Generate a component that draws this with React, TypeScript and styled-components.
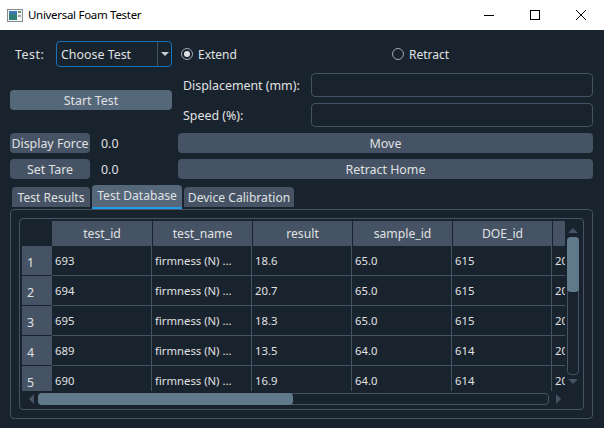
import React from 'react'
import styled, { createGlobalStyle } from 'styled-components'

const GlobalStyle = createGlobalStyle`
  html, body {
    margin: 0;
    padding: 0;
    background: #19232d;
  }
  * {
    box-sizing: border-box;
  }
`

const Window = styled.div`
  width: 604px;
  height: 428px;
  display: flex;
  flex-direction: column;
  overflow: hidden;
  background: #19232d;
  color: #e0e1e3;
  font-family: "Noto Sans", "Open Sans", sans-serif;
  font-size: 12.4px;
  line-height: 16px;
`

const TitleBar = styled.div`
  height: 30px;
  flex: none;
  display: flex;
  align-items: center;
  background: #fff;
  color: #000;
  padding-left: 7px;
`

const TitleText = styled.span`
  margin-left: 5px;
  flex: 1;
  font-size: 11.5px;
  letter-spacing: -0.3px;
`

const WindowButton = styled.div`
  width: 46px;
  height: 30px;
  display: flex;
  align-items: center;
  justify-content: center;
`

const Content = styled.div`
  flex: 1;
  padding: 11px 11px 9px 10px;
  display: flex;
  flex-direction: column;
`

const TopGrid = styled.div`
  display: grid;
  grid-template-columns: 162px 415px;
  column-gap: 6px;
`

const LeftColumn = styled.div`
  display: flex;
  flex-direction: column;
`

const TestRow = styled.div`
  height: 26px;
  display: flex;
  align-items: center;
  padding-left: 5px;
`

const TestLabel = styled.span`
  width: 41px;
  padding-top: 1px;
  letter-spacing: 0.5px;
`

const Combo = styled.div`
  width: 116px;
  height: 26px;
  display: flex;
  align-items: center;
  border: 1px solid #1a72bb;
  border-radius: 4px;
  padding-left: 4px;
`

const ComboText = styled.span`
  flex: 1;
  padding-top: 1px;
`

const ComboArrow = styled.div`
  width: 14px;
  height: 24px;
  border-left: 1px solid #455364;
  display: flex;
  align-items: center;
  justify-content: center;

  &::after {
    content: "";
    border-left: 4px solid transparent;
    border-right: 4px solid transparent;
    border-top: 4px solid #c9cdd0;
  }
`

const Button = styled.div<{ $accent?: boolean; $width?: number }>`
  height: 20px;
  width: ${(p) => (p.$width ? `${p.$width}px` : '100%')};
  flex: none;
  display: flex;
  align-items: center;
  justify-content: center;
  padding-top: 1px;
  border-radius: 4px;
  background: ${(p) => (p.$accent ? '#54687a' : '#455364')};
  white-space: nowrap;
`

const StartButton = styled(Button)`
  margin-top: 23px;
`

const RightColumn = styled.div`
  display: flex;
  flex-direction: column;
  gap: 6px;
`

const RadioRow = styled.div`
  height: 26px;
  display: grid;
  grid-template-columns: 211px 1fr;
  padding-left: 3px;
`

const RadioItem = styled.div`
  display: flex;
  align-items: center;
  gap: 5px;
`

const RadioLabel = styled.span`
  padding-top: 1px;
  font-size: 12px;
`

const RadioMark = styled.span<{ $checked?: boolean }>`
  width: 12px;
  height: 12px;
  border-radius: 50%;
  border: 1px solid #9da9b5;
  display: flex;
  align-items: center;
  justify-content: center;

  &::after {
    content: "";
    width: 6px;
    height: 6px;
    border-radius: 50%;
    background: ${(p) => (p.$checked ? '#e0e1e3' : 'transparent')};
  }
`

const FormGrid = styled.div`
  display: grid;
  grid-template-columns: 128px 282px;
  grid-auto-rows: 24px;
  row-gap: 6px;
  padding-left: 5px;
  align-items: center;
`

const FieldLabel = styled.span`
  white-space: nowrap;
  padding-top: 1px;
`

const Field = styled.div`
  height: 24px;
  border: 1px solid #455364;
  border-radius: 4px;
`

const ActionRow = styled.div`
  display: grid;
  grid-template-columns: 162px 415px;
  column-gap: 6px;
  margin-top: 6px;
`

const ReadoutGroup = styled.div`
  display: flex;
  align-items: center;
`

const Readout = styled.span`
  margin-left: 11px;
  padding-top: 1px;
`

const TabBar = styled.div`
  display: flex;
  align-items: flex-start;
  gap: 2px;
  height: 24px;
  margin-top: 6px;
  padding-left: 2px;
`

const Tab = styled.div<{ $selected?: boolean; $width: number }>`
  width: ${(p) => p.$width}px;
  height: ${(p) => (p.$selected ? 24 : 20)}px;
  margin-top: ${(p) => (p.$selected ? 0 : 2)}px;
  padding-top: ${(p) => (p.$selected ? 0 : 1)}px;
  display: flex;
  align-items: center;
  justify-content: center;
  border-radius: 4px 4px 0 0;
  background: ${(p) => (p.$selected ? '#54687a' : '#455364')};
  border-bottom: ${(p) => (p.$selected ? '2px solid #259ae9' : 'none')};
  font-size: 12.1px;
  white-space: nowrap;
`

const TabPane = styled.div`
  width: 583px;
  height: 210px;
  border: 1px solid #455364;
  border-radius: 4px;
  padding: 8px;
`

const TableFrame = styled.div`
  height: 192px;
  border: 1px solid #455364;
  border-radius: 4px;
  padding: 2px;
  display: grid;
  grid-template-columns: 543px 16px;
  grid-template-rows: 170px 14px;
`

const Viewport = styled.div`
  overflow: hidden;
`

const Corner = styled.div`
  width: 30px;
`

const HeaderRow = styled.div`
  display: grid;
  grid-template-columns: 30px 101px repeat(5, 100px);
  width: 631px;
  height: 25px;
`

const HeaderCell = styled.div`
  background: #455364;
  border-right: 1px solid #19232d;
  padding-top: 1px;
  font-size: 12.2px;
  display: flex;
  align-items: center;
  justify-content: center;
`

const DataRow = styled.div`
  display: grid;
  grid-template-columns: 30px repeat(6, 100px);
  width: 630px;
  height: 30px;
`

const RowHeader = styled.div`
  background: #455364;
  border-bottom: 1px solid #19232d;
  padding: 9px 0 0 5px;
`

const Cell = styled.div`
  border-right: 1px solid #455364;
  border-bottom: 1px solid #455364;
  padding: 1px 0 0 3px;
  font-size: 11.3px;
  display: flex;
  align-items: center;
  white-space: nowrap;
  overflow: hidden;
`

const VScroll = styled.div`
  grid-column: 2;
  grid-row: 1 / 3;
  display: flex;
  flex-direction: column;
  align-items: center;
  padding-top: 7px;
  gap: 4px;
`

const ArrowUp = styled.span`
  border-left: 5px solid transparent;
  border-right: 5px solid transparent;
  border-bottom: 5px solid #455364;
`

const ArrowDown = styled.span`
  border-left: 5px solid transparent;
  border-right: 5px solid transparent;
  border-top: 5px solid #455364;
`

const ArrowLeft = styled.span`
  border-top: 5px solid transparent;
  border-bottom: 5px solid transparent;
  border-right: 5px solid #455364;
`

const ArrowRight = styled.span`
  border-top: 5px solid transparent;
  border-bottom: 5px solid transparent;
  border-left: 5px solid #455364;
`

const VTrack = styled.div`
  width: 12px;
  height: 138px;
  border: 1px solid #455364;
  border-radius: 4px;
`

const VThumb = styled.div`
  height: 55px;
  margin: -1px;
  background: #60798b;
  border-radius: 4px;
`

const HScroll = styled.div`
  display: flex;
  align-items: center;
  gap: 4px;
  height: 12px;
  margin-top: 2px;
  padding-left: 7px;
`

const HTrack = styled.div`
  width: 511px;
  height: 12px;
  margin-right: 3px;
  border: 1px solid #455364;
  border-radius: 4px;
`

const HThumb = styled.div`
  width: 255px;
  height: 12px;
  margin: -1px;
  background: #60798b;
  border-radius: 4px;
`

const columns = ['test_id', 'test_name', 'result', 'sample_id', 'DOE_id', '']

const rows = [
  ['693', 'firmness (N) ...', '18.6', '65.0', '615', '20'],
  ['694', 'firmness (N) ...', '20.7', '65.0', '615', '20'],
  ['695', 'firmness (N) ...', '18.3', '65.0', '615', '20'],
  ['689', 'firmness (N) ...', '13.5', '64.0', '614', '20'],
  ['690', 'firmness (N) ...', '16.9', '64.0', '614', '20'],
]

const AppIcon = () => (
  <svg width="16" height="13" viewBox="0 0 16 13">
    <rect x="0.5" y="0.5" width="15" height="12" fill="#f4f4f4" stroke="#8a8a8a" />
    <rect x="2" y="2" width="8" height="9" fill="#2f7f78" />
    <rect x="2" y="2" width="8" height="3" fill="#3c78b4" />
    <rect x="11" y="2" width="3" height="2" fill="#6f8f6f" />
    <rect x="11" y="6" width="3" height="2" fill="#9aa9a0" />
  </svg>
)

const App = () => {
  return (
    <Window>
      <GlobalStyle />
      <TitleBar>
        <AppIcon />
        <TitleText>Universal Foam Tester</TitleText>
        <WindowButton>
          <svg width="10" height="10" viewBox="0 0 10 10">
            <path d="M0 5.5h10" stroke="#000" fill="none" />
          </svg>
        </WindowButton>
        <WindowButton>
          <svg width="10" height="10" viewBox="0 0 10 10">
            <rect x="0.5" y="0.5" width="9" height="9" stroke="#000" fill="none" />
          </svg>
        </WindowButton>
        <WindowButton>
          <svg width="10" height="10" viewBox="0 0 10 10">
            <path d="M0 0l10 10M10 0L0 10" stroke="#000" fill="none" />
          </svg>
        </WindowButton>
      </TitleBar>
      <Content>
        <TopGrid>
          <LeftColumn>
            <TestRow>
              <TestLabel>Test:</TestLabel>
              <Combo>
                <ComboText>Choose Test</ComboText>
                <ComboArrow />
              </Combo>
            </TestRow>
            <StartButton $accent>Start Test</StartButton>
          </LeftColumn>
          <RightColumn>
            <RadioRow>
              <RadioItem>
                <RadioMark $checked />
                <RadioLabel>Extend</RadioLabel>
              </RadioItem>
              <RadioItem>
                <RadioMark />
                <RadioLabel>Retract</RadioLabel>
              </RadioItem>
            </RadioRow>
            <FormGrid>
              <FieldLabel>Displacement (mm):</FieldLabel>
              <Field />
              <FieldLabel>Speed (%):</FieldLabel>
              <Field />
            </FormGrid>
          </RightColumn>
        </TopGrid>
        <ActionRow>
          <ReadoutGroup>
            <Button $width={80}>Display Force</Button>
            <Readout>0.0</Readout>
          </ReadoutGroup>
          <Button>Move</Button>
        </ActionRow>
        <ActionRow>
          <ReadoutGroup>
            <Button $width={80}>Set Tare</Button>
            <Readout>0.0</Readout>
          </ReadoutGroup>
          <Button>Retract Home</Button>
        </ActionRow>
        <TabBar>
          <Tab $width={78}>Test Results</Tab>
          <Tab $width={90} $selected>Test Database</Tab>
          <Tab $width={110}>Device Calibration</Tab>
        </TabBar>
        <TabPane>
          <TableFrame>
            <Viewport>
              <HeaderRow>
                <Corner />
                {columns.map((name, i) => (
                  <HeaderCell key={i}>{name}</HeaderCell>
                ))}
              </HeaderRow>
              {rows.map((row, i) => (
                <DataRow key={row[0]}>
                  <RowHeader>{i + 1}</RowHeader>
                  {row.map((value, j) => (
                    <Cell key={j}>{value}</Cell>
                  ))}
                </DataRow>
              ))}
            </Viewport>
            <VScroll>
              <ArrowUp />
              <VTrack>
                <VThumb />
              </VTrack>
              <ArrowDown />
            </VScroll>
            <HScroll>
              <ArrowLeft />
              <HTrack>
                <HThumb />
              </HTrack>
              <ArrowRight />
            </HScroll>
          </TableFrame>
        </TabPane>
      </Content>
    </Window>
  )
}

export default App
